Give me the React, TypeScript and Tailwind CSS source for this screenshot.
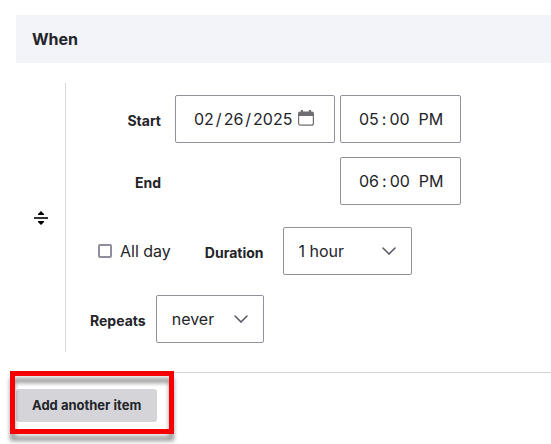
import { useState, type SelectHTMLAttributes } from "react";

const fieldClass =
  "h-12 rounded-xs border border-[#919199] bg-white text-base text-[#232429] outline-none";

const dateClass =
  "pl-[17px] [&::-webkit-datetime-edit-text]:px-px [&::-webkit-calendar-picker-indicator]:hidden";

const timeClass =
  "pl-[17px] [&::-webkit-datetime-edit-text]:px-[2px] [&::-webkit-calendar-picker-indicator]:hidden";

const labelClass = "pt-[3px] text-sm font-bold";

function CalendarIcon() {
  return (
    <svg viewBox="0 0 16 16" className="h-4 w-4" fill="none" aria-hidden="true">
      <path d="M3 0h2v1.5h6V0h2v1.5h1A2 2 0 0 1 16 3.5V6H0V3.5a2 2 0 0 1 2-2h1z" fill="#6e6f72" />
      <path d="M.6 5v8.2a2 2 0 0 0 2 2h10.8a2 2 0 0 0 2-2V5" stroke="#6e6f72" strokeWidth="1.2" />
    </svg>
  );
}

function DragHandleIcon() {
  return (
    <svg viewBox="0 0 14 14" className="h-[14px] w-[14px]" aria-hidden="true">
      <path d="M7 0 10 3v1H4V3zM7 14l3-3v-1H4v1z" fill="#000" />
      <path d="M0 6h14v2H0z" fill="#333" />
    </svg>
  );
}

type SelectProps = SelectHTMLAttributes<HTMLSelectElement> & { options: string[] };

function Select({ options, className, ...props }: SelectProps) {
  return (
    <div className={`relative ${className}`}>
      <select {...props} className={`${fieldClass} w-full appearance-none pl-[15px] pr-10`}>
        {options.map((o) => (
          <option key={o}>{o}</option>
        ))}
      </select>
      <svg
        viewBox="0 0 14 8"
        className="pointer-events-none absolute right-4 top-5 h-2 w-[14px]"
        fill="none"
        aria-hidden="true"
      >
        <path d="M1 1l6 6 6-6" stroke="#545560" strokeWidth="1.5" strokeLinecap="round" />
      </svg>
    </div>
  );
}

export default function App() {
  const [date, setDate] = useState("2025-02-26");
  const [start, setStart] = useState("17:00");
  const [end, setEnd] = useState("18:00");
  const [allDay, setAllDay] = useState(false);

  return (
    <div className="bg-white pb-6 pt-[15px] font-['Inter',sans-serif] text-[#232429]">
      <section className="ml-4">
        <h2 className="flex h-12 items-center bg-[#f3f4f9] px-4 text-base font-bold">When</h2>

        <div className="mt-5 flex">
          <button
            type="button"
            aria-label="Drag to reorder"
            className="flex w-[49px] shrink-0 items-center justify-center"
          >
            <DragHandleIcon />
          </button>

          <div className="grow border-l border-[#d8d9de] pb-[9px] pt-3">
            {/* Start and end */}
            <div className="grid grid-cols-[109px_165px_121px] items-center gap-y-[14px]">
              <label htmlFor="start-date" className={`${labelClass} pr-[14px] text-right`}>
                Start
              </label>
              <div className="relative w-40">
                <input
                  id="start-date"
                  type="date"
                  value={date}
                  onChange={(e) => setDate(e.target.value)}
                  className={`${fieldClass} ${dateClass} w-full`}
                />
                <span className="pointer-events-none absolute right-[21px] top-[15px]">
                  <CalendarIcon />
                </span>
              </div>
              <input
                type="time"
                aria-label="Start time"
                value={start}
                onChange={(e) => setStart(e.target.value)}
                className={`${fieldClass} ${timeClass} w-full`}
              />
              <label htmlFor="end-time" className={`${labelClass} pr-[14px] text-right`}>
                End
              </label>
              <input
                id="end-time"
                type="time"
                value={end}
                onChange={(e) => setEnd(e.target.value)}
                className={`${fieldClass} ${timeClass} col-start-3 w-full`}
              />
            </div>

            {/* Length of the event */}
            <div className="mt-[22px] flex items-center pl-8">
              <label className="flex items-center gap-2 text-base">
                <input
                  type="checkbox"
                  checked={allDay}
                  onChange={(e) => setAllDay(e.target.checked)}
                  className="h-[14px] w-[14px] appearance-none rounded-xs border-2 border-[#8e8e9c] checked:bg-[#8e8e9c]"
                />
                All day
              </label>
              <label htmlFor="duration" className={`${labelClass} ml-[34px] mr-[19px]`}>
                Duration
              </label>
              <Select
                id="duration"
                defaultValue="1 hour"
                options={["30 minutes", "1 hour", "2 hours", "Custom"]}
                className="w-[129px]"
              />
            </div>

            <div className="mt-5 flex items-center pl-6">
              <label htmlFor="repeats" className={`${labelClass} mr-[10px]`}>
                Repeats
              </label>
              <Select
                id="repeats"
                defaultValue="never"
                options={["never", "daily", "weekly", "monthly"]}
                className="w-[108px]"
              />
            </div>
          </div>
        </div>

        <div className="mt-5 border-t border-[#d4d4d8] pt-4">
          <div className="relative inline-block">
            <button
              type="button"
              className="h-[33px] rounded-[3px] bg-[#d4d4d9] px-4 text-[13px] font-bold"
            >
              Add another item
            </button>
            <span className="pointer-events-none absolute -bottom-3 -left-[6px] -right-[17px] -top-[18px] border-5 border-[#f60000] drop-shadow-[0_7px_2px_rgba(0,0,0,0.4)]" />
          </div>
        </div>
      </section>
    </div>
  );
}
